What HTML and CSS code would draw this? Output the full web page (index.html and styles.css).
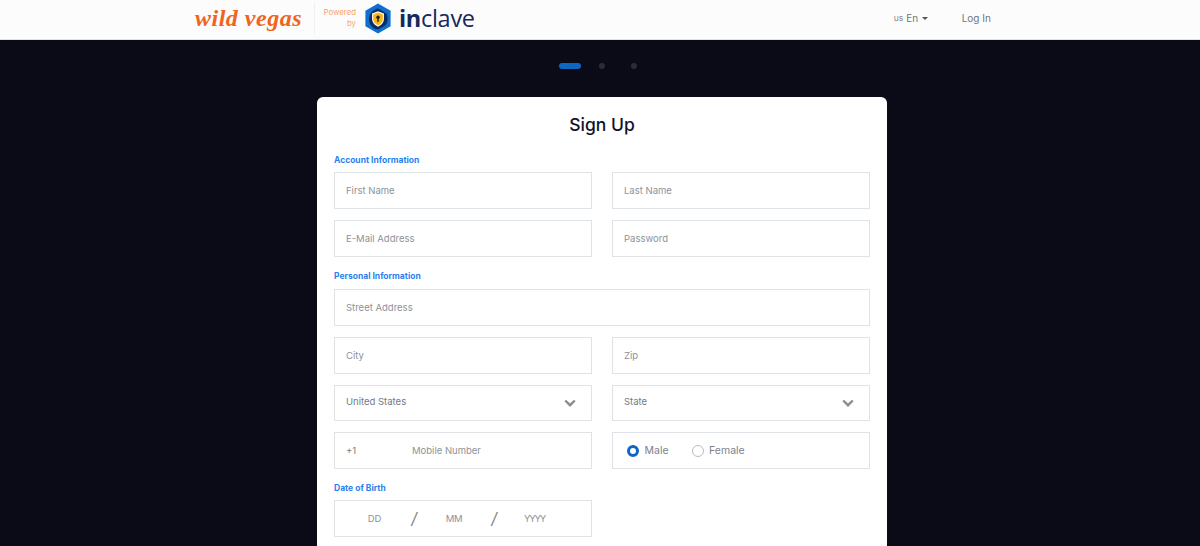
FILE: index.html
```html
<!DOCTYPE html>
<html lang="en">
<head>
<meta charset="utf-8">
<title>Sign Up</title>
<link rel="stylesheet" href="styles.css">
</head>
<body>
<header class="topbar">
  <div class="brand">
    <span class="brand-name">wild vegas</span>
    <span class="brand-rule"></span>
    <span class="powered">Powered<br>by</span>
    <svg class="shield" viewBox="0 0 28 31" width="28" height="31" aria-hidden="true">
      <path d="M14 .5 26.600 7.700v15.600L14 30.500 1.400 23.300V7.700z" fill="#0e6fd0"/>
      <path d="M14 5.500 22.500 10.400c1.800 4.200 1.500 8.400-.8 11.800L14 26.400c-5-.3-8.800-4.300-9-10.100C4.900 11.300 8.700 6.500 14 5.500z" fill="#0c2c5f"/>
      <path d="M14 8.300 20 10.500v5c0 3.800-2.400 6.700-6 8.200-3.600-1.500-6-4.400-6-8.200v-5z" fill="#f7f3e3"/>
      <path d="M14 9.800 18.800 11.500v4c0 3-1.900 5.400-4.800 6.700-2.900-1.300-4.800-3.700-4.800-6.700v-4z" fill="#f4b41c"/>
      <circle cx="14" cy="14.300" r="1.700" fill="#2a1d10"/>
      <rect x="13.300" y="14.800" width="1.400" height="4" fill="#2a1d10"/>
    </svg>
    <span class="inclave"><b>in</b>clave</span>
  </div>
  <nav class="top-actions">
    <span class="lang"><small>us</small> En <i class="caret"></i></span>
    <span class="login">Log In</span>
  </nav>
</header>

<main class="page">
  <div class="steps">
    <span class="step step-active"></span>
    <span class="step"></span>
    <span class="step"></span>
  </div>

  <section class="card">
    <h1 class="card-title">Sign Up</h1>

    <h2 class="group-label group-label-first">Account Information</h2>
    <div class="grid">
      <input class="field" placeholder="First Name">
      <input class="field" placeholder="Last Name">
      <input class="field" placeholder="E-Mail Address">
      <input class="field" type="password" placeholder="Password">
    </div>

    <h2 class="group-label group-label-next">Personal Information</h2>
    <div class="grid">
      <input class="field field-wide" placeholder="Street Address">
      <input class="field" placeholder="City">
      <input class="field" placeholder="Zip">
      <div class="field select"><span>United States</span>
        <svg class="chev" viewBox="0 0 12 8" width="12" height="8" aria-hidden="true"><path d="M1.200 1.500 6 6.200l4.800-4.700" fill="none" stroke="#8c8c8c" stroke-width="2.400"/></svg>
      </div>
      <div class="field select"><span>State</span>
        <svg class="chev" viewBox="0 0 12 8" width="12" height="8" aria-hidden="true"><path d="M1.200 1.500 6 6.200l4.800-4.700" fill="none" stroke="#8c8c8c" stroke-width="2.400"/></svg>
      </div>
      <div class="field phone"><span class="dial">+1</span><span class="hint">Mobile Number</span></div>
      <div class="field radios">
        <span class="radio radio-on"></span><span class="radio-text">Male</span>
        <span class="radio radio-off"></span><span class="radio-text">Female</span>
      </div>
    </div>

    <h2 class="group-label group-label-dob">Date of Birth</h2>
    <div class="grid">
      <div class="field dob">
        <span class="dob-part dob-dd">DD</span><span class="slash">/</span>
        <span class="dob-part dob-mm">MM</span><span class="slash">/</span>
        <span class="dob-part dob-yy">YYYY</span>
      </div>
    </div>
  </section>
</main>
</body>
</html>
```
FILE: styles.css
```css
* { box-sizing: border-box; }
html, body { margin: 0; height: 546px; overflow: hidden; }
body {
  background: #0a0b16;
  font-family: Inter, "Noto Sans", sans-serif;
  color: #737a85;
}
.topbar {
  height: 40px;
  background: #fcfcfc;
  border-bottom: 1px solid #dfe1e5;
  display: flex;
  align-items: center;
  padding: 0 0 3px 195px;
}
.brand { display: flex; align-items: center; }
.brand-name {
  font-family: "Liberation Serif", serif;
  font-style: italic;
  font-weight: 700;
  font-size: 24px;
  letter-spacing: .5px;
  color: #f0641f;
  width: 119px;
  white-space: nowrap;
  line-height: 30px;
}
.brand-rule { width: 1px; height: 32px; background: #f0f0f0; }
.powered {
  width: 41px;
  text-align: right;
  font-size: 7.800px;
  line-height: 11px;
  color: #fba46d;
  white-space: nowrap;
}
.shield { margin: 0 7px 0 8px; }
.inclave {
  font-family: "Open Sans", sans-serif;
  font-size: 23.500px;
  line-height: 30px;
  color: #15295c;
  letter-spacing: -.3px;
}
.inclave b { font-weight: 700; }
.top-actions {
  display: flex;
  align-items: center;
  margin-left: 419px;
  font-size: 10px;
  color: #6f7680;
}
.lang { display: flex; align-items: center; gap: 3px; width: 68px; }
.lang small { font-size: 8.500px; color: #8b8691; }
.caret {
  margin-left: 1px;
  width: 0;
  height: 0;
  border-left: 3px solid transparent;
  border-right: 3px solid transparent;
  border-top: 3px solid #555;
}
.login { white-space: nowrap; }
.page { display: flex; flex-direction: column; align-items: center; padding: 22px 0 0 4px; }
.steps { display: flex; align-items: center; gap: 26px; height: 7px; margin-left: -8px; }
.step { width: 6px; height: 6px; border-radius: 50%; background: #2a2c3e; }
.step-active { width: 22px; border-radius: 3px; background: #0d66c2; margin-right: -8px; }
.card {
  width: 570px;
  margin-top: 28px;
  padding: 17px 17px 30px;
  background: #fff;
  border-radius: 6px;
}
.card-title {
  margin: 0;
  text-align: center;
  font-size: 17.500px;
  line-height: 22px;
  font-weight: 500;
  color: #10132a;
}
.group-label {
  margin: 12px 0 5px;
  height: 14px;
  display: flex;
  align-items: center;
  font-size: 8.500px;
  font-weight: 700;
  color: #2a7ff0;
}
.group-label-first { margin-top: 17px; }
.group-label-next { margin-bottom: 6.500px; }
.grid { display: grid; grid-template-columns: 258px 258px; column-gap: 20px; row-gap: 11px; }
.field {
  height: 36.750px;
  border: 1px solid #dfe3e8;
  padding: 0 11px;
  background: #fff;
  font: inherit;
  font-size: 9.500px;
  color: #737a85;
  outline: none;
  width: 100%;
  display: flex;
  align-items: center;
}
.field::placeholder { color: #8c929a; opacity: 1; }
.field-wide { grid-column: 1 / -1; }
.select { justify-content: space-between; padding-right: 15px; }
.select span { position: relative; top: -1px; }
.phone .dial { width: 66px; color: #737a85; }
.phone .hint { color: #8c929a; }
.radios { padding-left: 14px; }
.radio { width: 12px; height: 12px; border-radius: 50%; flex: none; }
.radio-on { border: 3.500px solid #0d66c2; background: #fff; }
.radio-off { border: 1px solid #b9bcc2; background: #fff; margin-left: 23px; }
.radio-text { margin-left: 5.500px; font-size: 10.500px; color: #7c828b; }
.dob { color: #8c929a; padding: 0; }
.dob-part { text-align: center; }
.dob-dd { width: 79px; }
.dob-mm { width: 80px; letter-spacing: -.3px; }
.dob-yy { width: 81px; letter-spacing: -1.200px; }
.slash { font-size: 16px; color: #7c828b; font-style: italic; width: 0; display: flex; justify-content: center; }
```
